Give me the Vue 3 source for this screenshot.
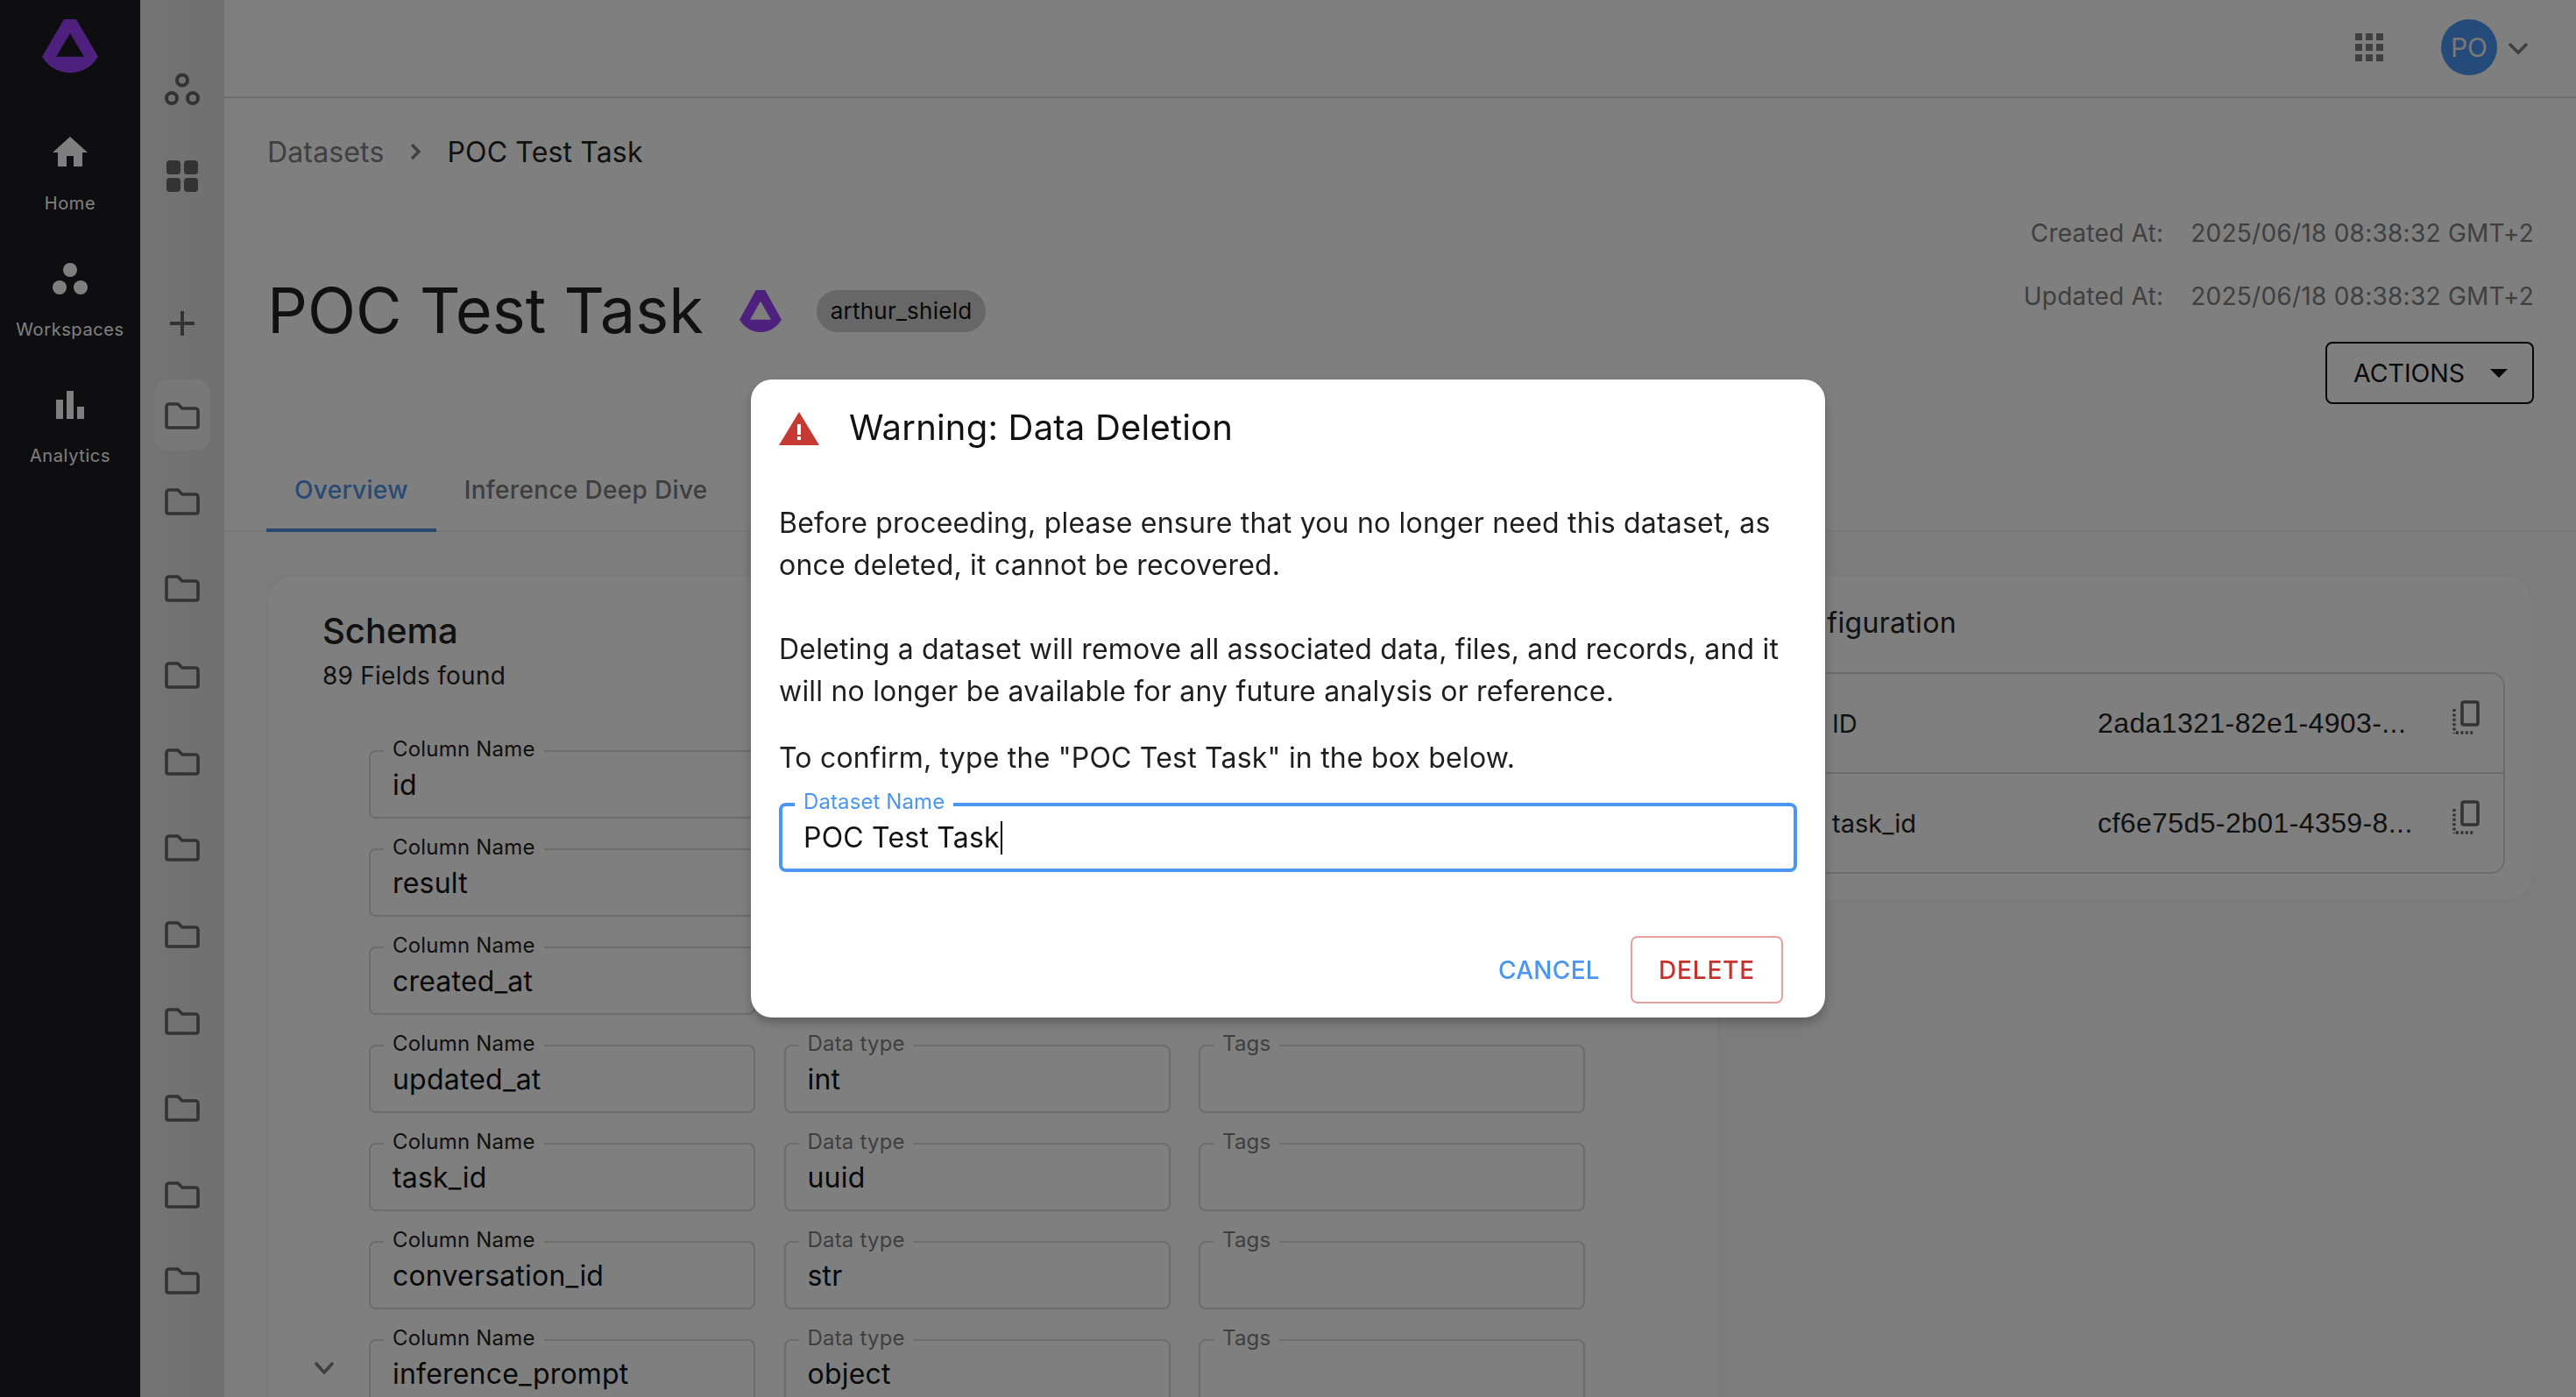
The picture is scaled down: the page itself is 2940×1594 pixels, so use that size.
<script setup>
const railItems = ["Home", "Workspaces", "Analytics"];
const folders = Array.from({ length: 11 }, (_, i) => i);
// types of the first rows sit behind the dialog, so they are left empty
const fields = [
  { name: "id" },
  { name: "result" },
  { name: "created_at" },
  { name: "updated_at", type: "int" },
  { name: "task_id", type: "uuid" },
  { name: "conversation_id", type: "str" },
  { name: "inference_prompt", type: "object", expandable: true },
];
const config = [
  { key: "ID", value: "2ada1321-82e1-4903-..." },
  { key: "task_id", value: "cf6e75d5-2b01-4359-8..." },
];
const logoPath = "M25 0H39L64 40A38.6 38.6 0 0 1 0 40ZM32 15L16 40H48Z";
</script>

<template>
  <div class="app">
    <nav class="rail">
      <svg class="logo" viewBox="0 0 64 57" preserveAspectRatio="none">
        <path :d="logoPath" fill="#9f43ff" fill-rule="evenodd" />
      </svg>
      <div class="rail-item" v-for="item in railItems" :key="item">
        <svg class="rail-icon" viewBox="0 0 48 48" fill="#fff">
          <path v-if="item === 'Home'" d="M20 41V29h8v12h10V25h6L24 7 4 25h6v16z" />
          <g v-else-if="item === 'Workspaces'">
            <circle cx="24" cy="15" r="8" />
            <circle cx="12" cy="35" r="8" />
            <circle cx="36" cy="35" r="8" />
          </g>
          <g v-else>
            <rect x="8" y="19" width="8" height="22" />
            <rect x="20" y="9" width="8" height="32" />
            <rect x="32" y="27" width="8" height="14" />
          </g>
        </svg>
        <span>{{ item }}</span>
      </div>
    </nav>

    <aside class="subrail">
      <svg class="sub-icon first" viewBox="0 0 48 48" fill="none" stroke="#666" stroke-width="4">
        <circle cx="24" cy="13.5" r="6" />
        <circle cx="12" cy="34" r="6" />
        <circle cx="36" cy="34" r="6" />
      </svg>
      <svg class="sub-icon second" viewBox="0 0 48 48" fill="#666">
        <rect x="6" y="6" width="16" height="16" rx="4" />
        <rect x="26" y="6" width="16" height="16" rx="4" />
        <rect x="6" y="26" width="16" height="16" rx="4" />
        <rect x="26" y="26" width="16" height="16" rx="4" />
      </svg>
      <svg class="sub-icon plus" viewBox="0 0 48 48" fill="none" stroke="#666" stroke-width="4">
        <path d="M24 10v28M10 24h28" />
      </svg>
      <div class="folder" :class="{ selected: i === 0 }" v-for="i in folders" :key="i">
        <svg width="44" height="34" viewBox="0 0 44 34" fill="none" stroke="#666" stroke-width="3.6" stroke-linejoin="round">
          <path d="M4 6a3 3 0 0 1 3-3h10l5 5h15a3 3 0 0 1 3 3v17a2 2 0 0 1-2 2H6a2 2 0 0 1-2-2z" />
        </svg>
      </div>
    </aside>

    <main class="main">
      <header class="topbar">
        <svg class="apps" viewBox="0 0 32 32" fill="#808080">
          <path d="M0 0h8v8H0zM12 0h8v8h-8zM24 0h8v8h-8zM0 12h8v8H0zM12 12h8v8h-8zM24 12h8v8h-8zM0 24h8v8H0zM12 24h8v8h-8zM24 24h8v8h-8z" />
        </svg>
        <div class="avatar">PO</div>
        <svg class="caret" viewBox="0 0 24 15" fill="none" stroke="#808080" stroke-width="3.6">
          <path d="M2 2l10 10L22 2" />
        </svg>
      </header>

      <section class="head">
        <div>
          <div class="crumbs">
            <span class="crumb-muted">Datasets</span>
            <svg width="14" height="20" viewBox="0 0 14 20" fill="none" stroke="#808080" stroke-width="3.4">
              <path d="M3 2l8 8-8 8" />
            </svg>
            <span>POC Test Task</span>
          </div>
          <div class="title-row">
            <h1>POC Test Task</h1>
            <svg class="title-logo" viewBox="0 0 64 57" preserveAspectRatio="none">
              <path :d="logoPath" fill="#9f43ff" fill-rule="evenodd" />
            </svg>
            <span class="chip">arthur_shield</span>
          </div>
        </div>
        <div class="meta">
          <div class="meta-row"><span>Created At:</span><span>2025/06/18 08:38:32 GMT+2</span></div>
          <div class="meta-row"><span>Updated At:</span><span>2025/06/18 08:38:32 GMT+2</span></div>
          <button class="actions">ACTIONS<i class="tri"></i></button>
        </div>
      </section>

      <div class="tabs">
        <div class="tab active">Overview</div>
        <div class="tab">Inference Deep Dive</div>
      </div>

      <div class="content">
        <section class="card schema">
          <h2>Schema</h2>
          <p class="found">89 Fields found</p>
          <div class="rows">
            <div class="row" v-for="f in fields" :key="f.name">
              <div class="slot">
                <svg v-if="f.expandable" width="26" height="16" viewBox="0 0 26 16" fill="none" stroke="#808080" stroke-width="3.6">
                  <path d="M3 2l10 11L23 2" />
                </svg>
              </div>
              <div class="field">
                <label class="dark">Column Name</label>
                <span>{{ f.name }}</span>
              </div>
              <div class="field">
                <template v-if="f.type">
                  <label>Data type</label>
                  <span>{{ f.type }}</span>
                </template>
              </div>
              <div class="field">
                <label v-if="f.type">Tags</label>
              </div>
            </div>
          </div>
        </section>

        <section class="card config">
          <h3>Configuration</h3>
          <div class="table">
            <div class="tr" v-for="c in config" :key="c.key">
              <span class="key">{{ c.key }}</span>
              <span class="val">{{ c.value }}</span>
              <svg class="copy" viewBox="0 0 34 40" fill="none" stroke="#666">
                <rect x="14" y="2" width="18" height="26" rx="2" stroke-width="3.6" />
                <path d="M5 10v28M7 37h20" stroke-width="3.4" stroke-dasharray="3 2.4" />
              </svg>
            </div>
          </div>
        </section>
      </div>
    </main>

    <div class="scrim">
      <div class="dialog">
        <div class="dialog-title">
          <svg width="46" height="38" viewBox="0 0 46 38">
            <path d="M23 0L46 38H0z" fill="#c53a33" />
            <path d="M21 14h4v12h-4zM21 28h4v4h-4z" fill="#fff" />
          </svg>
          <span>Warning: Data Deletion</span>
        </div>
        <p class="dialog-text">
          Before proceeding, please ensure that you no longer need this dataset, as<br />
          once deleted, it cannot be recovered.<br /><br />
          Deleting a dataset will remove all associated data, files, and records, and it<br />
          will no longer be available for any future analysis or reference.
        </p>
        <p class="dialog-text confirm">To confirm, type the "POC Test Task" in the box below.</p>
        <div class="input">
          <label>Dataset Name</label>
          <span>POC Test Task</span><i class="cursor"></i>
        </div>
        <div class="dialog-actions">
          <button class="cancel">CANCEL</button>
          <button class="delete">DELETE</button>
        </div>
      </div>
    </div>
  </div>
</template>

<style>
body {
  margin: 0;
  overflow: hidden;
}
</style>

<style scoped>
.app {
  display: flex;
  width: 2940px;
  height: 1594px;
  overflow: hidden;
  font-family: Inter, "Liberation Sans", sans-serif;
  color: #222;
  background: #fff;
}
.rail {
  flex: none;
  width: 160px;
  background: #1c1c20;
  display: flex;
  flex-direction: column;
  align-items: center;
  padding-top: 22px;
  box-sizing: border-box;
}
.logo {
  width: 64px;
  height: 61px;
  margin-bottom: 66px;
}
.rail-item {
  display: flex;
  flex-direction: column;
  align-items: center;
  gap: 21px;
  margin-bottom: 47px;
  color: #fff;
  font-size: 20px;
  line-height: 28px;
  letter-spacing: 0.6px;
}
.rail-icon {
  width: 48px;
  height: 48px;
}
.subrail {
  flex: none;
  width: 96px;
  background: linear-gradient(90deg, #e8e8e8, #e0e0e0);
  display: flex;
  flex-direction: column;
  align-items: center;
  padding-top: 78px;
  box-sizing: border-box;
}
.sub-icon {
  width: 48px;
  height: 48px;
}
.sub-icon.second {
  margin-top: 51px;
}
.sub-icon.plus {
  margin-top: 120px;
  margin-bottom: 40px;
}
.folder {
  flex: none;
  width: 64px;
  height: 81px;
  box-sizing: border-box;
  padding-top: 2px;
  margin-bottom: 17.8px;
  border-radius: 16px;
  display: flex;
  align-items: center;
  justify-content: center;
}
.folder.selected {
  background: #f1f1f2;
}
.main {
  flex: 1;
  min-width: 0;
  display: flex;
  flex-direction: column;
}
.topbar {
  flex: none;
  height: 112px;
  box-sizing: border-box;
  border-bottom: 2px solid #dcdcdc;
  display: flex;
  align-items: center;
  padding: 0 54px 0 0;
  justify-content: flex-end;
}
.apps {
  width: 32px;
  height: 32px;
  margin-right: 66px;
  margin-bottom: 2px;
}
.avatar {
  width: 64px;
  height: 64px;
  border-radius: 50%;
  background: #4896f4;
  color: #f0f0f0;
  font-size: 30px;
  line-height: 64px;
  text-align: center;
  margin-bottom: 2px;
}
.caret {
  width: 24px;
  height: 15px;
  margin-left: 12px;
}
.head {
  flex: none;
  height: 399px;
  display: flex;
  justify-content: space-between;
  padding: 0 48px 0 49px;
  box-sizing: border-box;
}
.crumbs {
  display: flex;
  align-items: center;
  margin-top: 37px;
  height: 48px;
  font-size: 32px;
  letter-spacing: 0.15px;
  gap: 29px;
}
.crumb-muted {
  color: #808080;
}
.title-row {
  display: flex;
  align-items: center;
  margin-top: 114px;
  height: 88px;
}
h1 {
  margin: 0 0 3px;
  font-size: 72px;
  font-weight: 400;
  white-space: nowrap;
}
.title-logo {
  width: 48px;
  height: 48px;
  margin-left: 41px;
}
.chip {
  margin-left: 40px;
  height: 48px;
  line-height: 48px;
  padding: 0 16px;
  border-radius: 24px;
  background: #cfcfcf;
  font-size: 26px;
  letter-spacing: 0.25px;
  color: #111;
}
.meta {
  padding-top: 134px;
  display: flex;
  flex-direction: column;
  align-items: flex-end;
  gap: 32px;
}
.meta-row {
  display: flex;
  gap: 31px;
  height: 40px;
  line-height: 40px;
  font-size: 28px;
  color: #7e7e7e;
  letter-spacing: 0.25px;
}
.actions {
  display: flex;
  align-items: center;
  justify-content: space-between;
  width: 238px;
  height: 71px;
  padding: 0 28px 0 30px;
  box-sizing: border-box;
  background: transparent;
  border: 2px solid #111;
  border-radius: 8px;
  font: inherit;
  font-size: 28.5px;
  color: #111;
}
.tri {
  width: 0;
  height: 0;
  border-left: 10px solid transparent;
  border-right: 10px solid transparent;
  border-top: 10px solid #111;
}
.tabs {
  flex: none;
  height: 96px;
  box-sizing: border-box;
  display: flex;
  padding-left: 48px;
  border-bottom: 2px solid #f0f0f0;
}
.tab {
  padding: 0 32px;
  height: 96px;
  line-height: 96px;
  font-size: 28px;
  font-weight: 500;
  letter-spacing: 0.33px;
  color: #7c7c7c;
  box-sizing: border-box;
}
.tab.active {
  color: #4f94e8;
  border-bottom: 4px solid #4a8fe0;
}
.content {
  flex: 1;
  min-height: 0;
  background: #f9f9f9;
  display: flex;
  align-items: flex-start;
  gap: 28px;
  padding: 48px 49px 0 48px;
  overflow: hidden;
}
.card {
  background: #fff;
  border: 2px solid #f4f4f4;
  border-radius: 32px;
  box-sizing: border-box;
}
.schema {
  flex: none;
  width: 1658px;
  height: 1100px;
  padding: 39px 0 0 62px;
}
h2 {
  margin: 0;
  font-size: 40px;
  line-height: 48px;
  font-weight: 500;
}
.found {
  margin: 7px 0 0;
  font-size: 28px;
  line-height: 40px;
  letter-spacing: 0.25px;
}
.rows {
  margin-top: 65px;
  margin-left: -31px;
}
.row {
  display: flex;
  gap: 32.5px;
  margin-bottom: 34px;
}
.slot {
  flex: none;
  width: 66px;
  height: 66px;
  margin-right: -14.5px;
  display: flex;
  align-items: center;
  justify-content: center;
}
.field {
  position: relative;
  flex: none;
  width: 441px;
  height: 78px;
  box-sizing: border-box;
  border: 2px solid #d8d8d8;
  border-radius: 8px;
  padding-left: 25px;
  font-size: 32px;
  line-height: 76px;
  letter-spacing: 0.2px;
  color: #111;
}
.field label {
  position: absolute;
  top: -17px;
  left: 15px;
  padding: 0 10px;
  background: #fff;
  font-size: 24px;
  line-height: 28px;
  letter-spacing: 0.2px;
  color: #7e7e7e;
}
.field label.dark {
  color: #222;
}
.config {
  flex: 1;
  min-width: 0;
  height: 374px;
  padding: 32px 30px 0 31px;
}
h3 {
  margin: 0 0 34px;
  font-size: 32px;
  line-height: 44px;
  font-weight: 400;
  letter-spacing: 0.3px;
}
.table {
  border: 2px solid #d8d8d8;
  border-radius: 16px;
}
.tr {
  height: 112px;
  display: flex;
  align-items: center;
  padding-left: 66px;
  font-size: 29px;
}
.tr + .tr {
  border-top: 2px solid #d8d8d8;
}
.key {
  width: 303px;
}
.val {
  width: 402px;
  white-space: nowrap;
  font-family: "Liberation Sans", Arial, sans-serif;
  font-size: 32px;
  letter-spacing: 0.4px;
}
.copy {
  width: 34px;
  height: 40px;
  margin-top: -13px;
}
.scrim {
  position: fixed;
  inset: 0;
  background: rgba(0, 0, 0, 0.5);
  display: flex;
  align-items: center;
  justify-content: center;
}
.dialog {
  width: 1226px;
  height: 728px;
  box-sizing: border-box;
  background: #fff;
  border-radius: 24px;
  padding: 28px 32px 16px;
  box-shadow: 0 6px 12px rgba(0, 0, 0, 0.25);
}
.dialog-title {
  display: flex;
  align-items: center;
  gap: 34px;
  height: 56px;
  font-size: 40px;
  letter-spacing: 0.2px;
  color: #111;
}
.dialog-title span {
  margin-top: -3px;
}
.dialog-text {
  margin: 56px 0 0;
  font-size: 32px;
  line-height: 48px;
  letter-spacing: 0.2px;
  color: #1e1e1e;
  white-space: nowrap;
}
.dialog-text.confirm {
  margin-top: 28px;
}
.input {
  position: relative;
  margin-top: 27px;
  height: 79px;
  box-sizing: border-box;
  border: 4px solid #4a96f0;
  border-radius: 8px;
  padding-left: 24px;
  display: flex;
  align-items: center;
  font-size: 32px;
  letter-spacing: 0.2px;
  color: #111;
}
.input label {
  position: absolute;
  top: -17px;
  left: 14px;
  padding: 0 10px;
  background: #fff;
  font-size: 24px;
  line-height: 24px;
  letter-spacing: 0.1px;
  color: #4a96f0;
}
.cursor {
  width: 2px;
  height: 38px;
  background: #000;
  margin-left: 1px;
}
.dialog-actions {
  margin-top: 73px;
  padding-right: 16px;
  display: flex;
  justify-content: flex-end;
  align-items: center;
  gap: 35px;
}
.dialog-actions button {
  font: inherit;
  font-size: 28px;
  font-weight: 500;
  letter-spacing: 0.8px;
  background: transparent;
  border: 0;
  padding: 0;
}
.dialog-actions .cancel {
  color: #4a96f0;
  letter-spacing: 0.3px;
}
.dialog-actions .delete {
  width: 174px;
  height: 77px;
  color: #c5312d;
  border: 2px solid #e8a09e;
  border-radius: 8px;
}
</style>
